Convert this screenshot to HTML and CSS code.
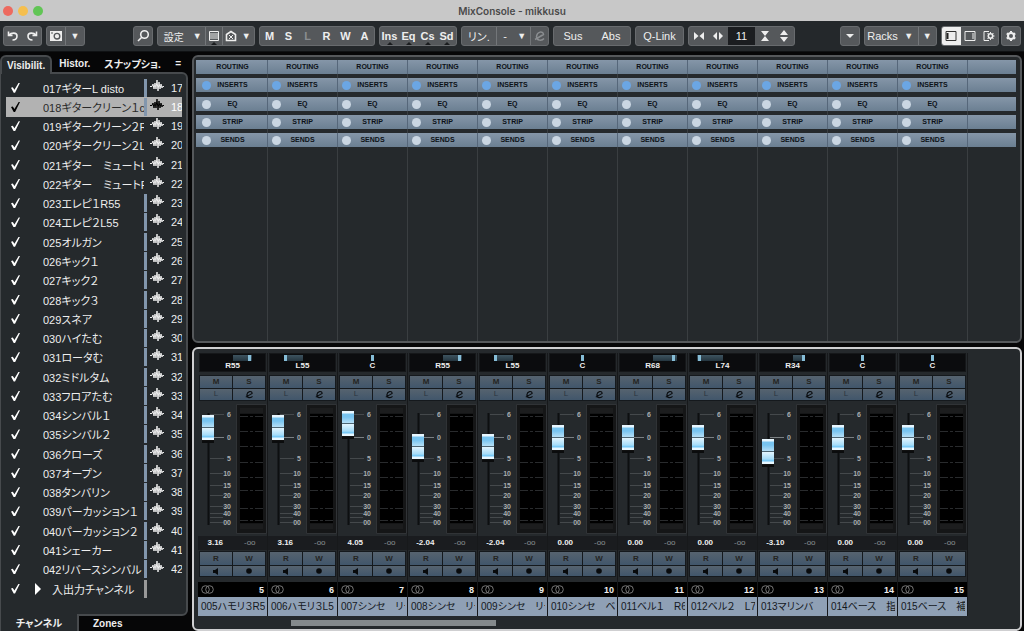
FILE: index.html
```html
<!DOCTYPE html>
<html lang="ja">
<head>
  <meta charset="utf-8">
  <title>MixConsole - mikkusu</title>
  <link rel="stylesheet" href="styles.css">
</head>
<body>
  <header class="titlebar">
    <span class="light red"></span>
    <span class="light yellow"></span>
    <span class="light green"></span>
    <h1>MixConsole - mikkusu</h1>
  </header>

  <nav class="toolbar">
    <div class="group w39">
      <button aria-label="Undo"><svg width="12" height="12" viewBox="0 0 12 12"><path d="M1.500 1.500v4h4M2 5.200C4 2.500 10 2 10 6c0 2.500-2 4-4.500 4" class="line thick"/></svg></button>
      <button aria-label="Redo"><svg width="12" height="12" viewBox="0 0 12 12"><path d="M10.500 1.500v4h-4M10 5.200C8 2.500 2 2 2 6c0 2.500 2 4 4.500 4" class="line thick"/></svg></button>
    </div>
    <div class="group w39">
      <button aria-label="Snapshot"><svg width="14" height="12" viewBox="0 0 14 12"><path d="M1 1h12v10H1z" fill="#eee"/><circle cx="8" cy="6.200" r="2.800" fill="none" stroke="#55585b" stroke-width="1.400"/><path d="M2 3h2" stroke="#55585b"/></svg></button>
      <button class="split arrow" aria-label="Snapshot menu">▼</button>
    </div>
    <div class="group w20 gap-search">
      <button aria-label="Search"><svg width="14" height="14" viewBox="0 0 14 14"><circle cx="8.500" cy="5.500" r="3.800" class="line thick"/><path d="M5.800 8.200L2 12" class="line thick"/></svg></button>
    </div>
    <div class="group w98">
      <button class="wide small">設定</button>
      <button class="arrow" aria-label="Settings menu">▼</button>
      <button class="split marked" aria-label="List"><svg width="12" height="12" viewBox="0 0 12 12"><path d="M1.500 1.500h9v9h-9zM2 4h8M2 6h8M2 8h8" class="line"/></svg></button>
      <button class="split" aria-label="Channel types"><svg width="12" height="12" viewBox="0 0 12 12"><path d="M1.500 10.500V4.500L6 1.500l4.500 3v6z" class="line thick"/><path d="M4 5l4 4M8 5L4 9" class="line"/></svg></button>
      <button class="arrow" aria-label="Channel types menu">▼</button>
    </div>
    <div class="group w116 bold">
      <button>M</button><button>S</button><button class="off">L</button><button>R</button><button>W</button><button>A</button>
    </div>
    <div class="group w78 bold">
      <button class="marked">Ins</button><button class="marked">Eq</button><button class="marked">Cs</button><button class="marked">Sd</button>
    </div>
    <div class="group w88">
      <button class="wide">リン.</button>
      <button class="split">-</button>
      <button class="arrow" aria-label="Link menu">▼</button>
      <button class="split" aria-label="Bypass"><svg width="12" height="12" viewBox="0 0 12 12"><path d="M1 9.500L9.500 4.500C9 .5 3 1.500 2.500 6.500c0 4.500 5.500 4.500 7.500 2" class="line faded"/></svg></button>
    </div>
    <div class="group w78"><button>Sus</button><button>Abs</button></div>
    <div class="group w49"><button>Q-Link</button></div>
    <div class="group w107">
      <button aria-label="Narrower"><svg width="12" height="10" viewBox="0 0 12 10"><path d="M1 1l4.500 4L1 9zM11 1L6.500 5 11 9z" fill="#eee"/></svg></button>
      <button aria-label="Wider"><svg width="12" height="10" viewBox="0 0 12 10"><path d="M5 1v8L1 5zM7 1v8l4-4z" fill="#eee"/></svg></button>
      <input class="count" type="text" value="11" aria-label="Channel width">
      <button aria-label="Lower"><svg width="12" height="12" viewBox="0 0 12 12"><path d="M2 1h8L6 6l4 5H2l4-5z" fill="#eee"/></svg></button>
      <button aria-label="Higher"><svg width="12" height="12" viewBox="0 0 12 12"><path d="M6 0l4 5H2zM6 12l4-5H2z" fill="#eee"/></svg></button>
    </div>
    <div class="group w20 push">
      <button aria-label="More"><svg width="8" height="4" viewBox="0 0 8 4"><path d="M0 0h8L4 4z" fill="#eee"/></svg></button>
    </div>
    <div class="group w73">
      <button class="wide">Racks</button>
      <button class="arrow" aria-label="Racks menu">▼</button>
      <button class="split arrow" aria-label="Racks presets">▼</button>
    </div>
    <div class="group w58">
      <button class="selected" aria-label="Left zone"><svg width="12" height="12" viewBox="0 0 12 12"><path d="M1 1.500h10v9H1z" fill="none" stroke="#333"/><path d="M2.500 3v6" stroke="#222" stroke-width="2"/></svg></button>
      <button aria-label="Right zone"><svg width="12" height="12" viewBox="0 0 12 12"><path d="M1 1.500h10v9H1zM9 3v6" class="line"/></svg></button>
      <button aria-label="Zone setup"><svg width="12" height="12" viewBox="0 0 12 12"><path d="M6 1.500H1v9h5" class="line"/><circle cx="7.500" cy="6" r="2.200" class="line thick"/><path d="M7.500 2v1.500M7.500 8.500V10M10 6h1.500M9.500 4l1-1M9.500 8l1 1M5.500 4l-1-1M5.500 8l-1 1" class="line"/></svg></button>
    </div>
    <div class="group w20 gear">
      <button aria-label="Setup"><svg width="12" height="12" viewBox="0 0 12 12"><circle cx="6" cy="6" r="3" fill="none" stroke="#eee" stroke-width="2"/><path d="M6 1v1.500M6 9.500V11M1.700 3.500L3 4.200M9 7.800l1.300.7M1.700 8.500L3 7.800M9 4.200l1.300-.7" stroke="#eee" stroke-width="2"/></svg></button>
    </div>
  </nav>

  <div class="workspace">
    <aside class="sidebar">
      <div class="tabs">
        <button class="tab active">Visibilit.</button>
        <button class="tab">Histor.</button>
        <button class="tab">スナップショ.</button>
        <button class="tab menu">=</button>
      </div>
      <div class="tracks" id="tracks"></div>
      <div class="bottom-tabs">
        <button class="tab active">チャンネル</button>
        <button class="tab">Zones</button>
      </div>
    </aside>

    <main class="console">
      <section class="racks" id="racks"></section>
      <section class="faders">
        <div class="strips" id="strips"></div>
        <div class="scrollbar"></div>
      </section>
    </main>
  </div>

  <script src="mixer.js"></script>
</body>
</html>
```

FILE: styles.css
```css
* {
  box-sizing: border-box;
}
body {
  margin: 0;
  height: 100vh;
  display: flex;
  flex-direction: column;
  overflow: hidden;
  background: #060607;
  color: #eee;
  font-family: "Liberation Sans", "Noto Sans CJK JP", sans-serif;
  font-size: 11px;
  font-feature-settings: "palt";
}
button, input {
  margin: 0;
  padding: 0;
  border: 0;
  background: none;
  color: inherit;
  font: inherit;
  font-feature-settings: inherit;
}

/* title bar */
.titlebar {
  flex: none;
  position: relative;
  display: flex;
  align-items: center;
  gap: 5px;
  height: 21px;
  padding-left: 3px;
  background: #c8c8c8;
}
.titlebar h1 {
  position: absolute;
  left: 0;
  right: 0;
  margin: 0;
  text-align: center;
  font: 600 10px Inter, sans-serif;
  color: #4a4a4a;
}
.light {
  width: 10px;
  height: 10px;
  border-radius: 50%;
}
.red { background: #ed6a5f; }
.yellow { background: #f5bf4f; }
.green { background: #61c555; }

/* toolbar */
.toolbar {
  flex: none;
  display: flex;
  align-items: center;
  gap: 4px;
  height: 31px;
  padding: 0 3px;
  background: #24282b;
  border-bottom: 1px solid #101214;
}
.group {
  flex: none;
  display: flex;
  height: 20px;
  border: 1px solid #686b6e;
  border-radius: 3px;
  background: #55585b;
  overflow: hidden;
}
.group button {
  flex: 1;
  display: flex;
  align-items: center;
  justify-content: center;
  position: relative;
  white-space: nowrap;
}
.group .wide { flex: 2; }
.group .split { border-left: 1px solid #737679; }
.group .arrow { font-size: 9px; }
.group .small { font-size: 10px; }
.group .off { color: #8a8d90; }
.group .selected { background: #eee; }
.bold { font-weight: bold; }
.marked::after {
  content: "";
  position: absolute;
  left: calc(50% - 3px);
  bottom: 0;
  border: 3px solid transparent;
  border-top: 0;
  border-bottom-color: #1a1c1e;
}
.w20 { width: 20px; }
.w39 { width: 39px; }
.w49 { width: 49px; }
.w58 { width: 58px; }
.w73 { width: 73px; }
.w78 { width: 78px; }
.w88 { width: 88px; }
.w98 { width: 98px; }
.w107 { width: 107px; }
.w116 { width: 116px; }
.gap-search { margin-left: 44px; }
.push { margin-left: auto; }
.gear { margin-left: -2px; }
.count {
  width: 27px;
  background: #1b1d20;
  text-align: center;
}
.line {
  fill: none;
  stroke: #eee;
  stroke-width: 1;
}
.thick { stroke-width: 1.6; }
.faded { stroke: #8a8d90; stroke-width: 1.5; }

.workspace {
  flex: 1;
  min-height: 0;
  display: flex;
  gap: 4px;
  padding: 3px 2px 0 0;
}

/* visibility list */
.sidebar {
  flex: none;
  width: 188px;
  display: flex;
  flex-direction: column;
}
.tabs, .bottom-tabs {
  flex: none;
  display: flex;
}
.tab {
  height: 17px;
  padding: 0 7px;
  font-size: 10px;
  font-weight: bold;
  white-space: nowrap;
}
.tabs .active {
  position: relative;
  height: 19px;
  margin-bottom: -2px;
  border: 2px solid #474a4d;
  border-bottom: 0;
  border-radius: 6px 6px 0 0;
  padding: 0 5px;
  background: #25292c;
}
.tabs .menu { margin-left: auto; }
.tracks {
  flex: 1;
  min-height: 0;
  display: flex;
  flex-direction: column;
  padding: 4px 4px 16px 5px;
  background: #25292c;
  border: 2px solid #474a4d;
  border-left-width: 1px;
  border-radius: 0 6px 6px 0;
}
.track {
  flex: 1;
  min-height: 0;
  display: grid;
  grid-template-columns: 37px 101px 4px 23px 11px;
  align-items: center;
  white-space: nowrap;
}
.track.current {
  background: #b2b2b2;
  color: #2a2a2a;
}
.track.folder { grid-template-columns: 28px 18px 92px 4px; }
.track input {
  appearance: none;
  width: 9px;
  height: 10px;
  margin-left: 5px;
}
.track input:checked {
  background: #fff;
  clip-path: polygon(0 50%, 20% 45%, 38% 70%, 85% 0, 100% 0, 45% 100%, 30% 100%);
}
.track.current input:checked { background: #000; }
.track label, .track .num { overflow: hidden; }
.track.current .num { color: #fff; }
.track .bar {
  width: 3px;
  height: 18px;
}
.bar.audio { background: #8296ad; }
.bar.io { background: #999; }
.wave { margin: -4px 0 0 2px; }
.wave path { fill: none; stroke: #eee; }
.current .wave path { stroke: #000; }
.bottom-tabs .tab { height: 15px; }
.bottom-tabs .active {
  position: relative;
  width: 77px;
  height: 17px;
  margin-top: -2px;
  background: #25292c;
  border-left: 1px solid #474a4d;
}
.bottom-tabs .tab + .tab {
  flex: 1;
  padding-left: 14px;
  border-left: 2px solid #474a4d;
  text-align: left;
}

/* channel racks */
.console {
  flex: 1;
  min-width: 0;
  display: flex;
  flex-direction: column;
  gap: 4px;
}
.racks {
  flex: 1;
  min-height: 0;
  display: flex;
  padding: 3px 4px 0 2px;
  background: #25292c;
  border: 2px solid #55585b;
  border-radius: 6px;
  overflow: hidden;
}
.rack {
  flex: none;
  width: 70px;
  border-right: 1px solid #3a3e41;
}
.rack:first-child { width: 72px; }
.rack.rest { flex: 1; border: 0; }
.slots {
  display: flex;
  flex-direction: column;
  justify-content: space-between;
  height: 87px;
}
.slot {
  position: relative;
  height: 14px;
  margin-right: -1px;
  border-right: 1px solid #56677a;
  background: linear-gradient(#8596a8, #6b7f92);
  text-align: center;
  font-size: 7px;
  line-height: 14px;
  font-weight: bold;
  color: #0c1116;
}
.rack:first-child .slot { padding-left: 2px; }
.rest .slot { margin: 0; border: 0; }
.dot {
  position: absolute;
  left: 4px;
  top: 3px;
  width: 9px;
  height: 9px;
  border-radius: 50%;
  background: #cad6e2;
}
.rack:first-child .dot { left: 6px; }
.dot.on { background: #6ba6e4; }

/* faders */
.faders {
  flex: none;
  padding: 4px 4px 3px;
  background: #25292c;
  border: 2px solid #cfcfd1;
  border-radius: 6px;
}
.strips { display: flex; }
.strip {
  flex: none;
  width: 70px;
  border-right: 1px solid #17191b;
}
.pan {
  height: 19px;
  margin: 0 1px 3px;
  padding-top: 1px;
  background: #0b0c0e;
  border: 1px solid #151719;
  text-align: center;
  font-size: 8px;
  line-height: 10px;
  font-weight: bold;
}
.pan input {
  appearance: none;
  display: block;
  width: 100%;
  height: 6px;
  background: linear-gradient(#3d535f, #253640) no-repeat;
}
.pan input::-webkit-slider-thumb {
  appearance: none;
  width: 3px;
  height: 6px;
  background: #86bdd7;
}
.pan output { display: block; }
.keys {
  display: grid;
  grid-template-columns: 1fr 1fr;
  gap: 1px;
  height: 26px;
  margin: 2px 1px;
  padding: 1px;
  background: #15191d;
}
.keys button {
  display: flex;
  align-items: center;
  justify-content: center;
  background: linear-gradient(#56636f, #41566b);
  font-size: 8px;
  line-height: 10px;
  font-weight: bold;
  color: #24241f;
}
.keys .dim { color: #2c3640; font-weight: normal; }
.readout + .keys { margin-top: 1px; }
.body {
  display: grid;
  grid-template-columns: 35px 31px;
  height: 133px;
  margin-left: 1px;
  justify-content: space-between;
  align-items: start;
}
.scale, .level { grid-area: 1 / 1; }
.scale text {
  fill: #a9adb0;
  font-size: 7px;
  font-weight: bold;
  text-anchor: end;
}
.level {
  appearance: none;
  writing-mode: vertical-lr;
  direction: rtl;
  width: 12px;
  height: 131px;
  margin-left: 3px;
  position: relative;
}
.level::-webkit-slider-thumb {
  appearance: none;
  width: 12px;
  height: 26px;
  background: linear-gradient(#e8f7ff 0 2px, #78c4f0 3px 6px, #b6dff6 12px, #4c6472 12px 13px, #e3f5ff 13px, #a6dcf8 20px, #6cc4f6 22px, #e8f7ff 23px 25px, #111 25px);
  box-shadow: 0 2px 0 #0b0c0d;
}
.meter { display: block; }
.readout {
  display: grid;
  grid-template-columns: 1fr 1fr;
  height: 14px;
  background: #1a1c1f;
  font-size: 8px;
  line-height: 14px;
  font-weight: bold;
  text-align: center;
}
.readout .peak { color: #8b8f93; font-weight: normal; }
.id {
  display: flex;
  align-items: center;
  justify-content: space-between;
  height: 15px;
  margin-top: 5px;
  padding: 0 3px;
  background: #000;
  font-size: 9px;
  font-weight: bold;
}
.name {
  height: 19px;
  padding-left: 3px;
  border-right: 2px solid #8fa0b5;
  background: #8fa0b5;
  color: #14181d;
  font-size: 10px;
  line-height: 19px;
  white-space: nowrap;
  overflow: hidden;
}
.scrollbar {
  width: 25%;
  height: 6px;
  margin: 4px 0 0 93px;
  background: #84898c;
}
```

FILE: mixer.js
```js
const tracks = [
  "017ギターL disto", "018ギタークリーン１c", "019ギタークリーン２R", "020ギタークリーン２L",
  "021ギター　ミュートL", "022ギター　ミュートR", "023エレピ１R55", "024エレピ２L55", "025オルガン",
  "026キック１", "027キック２", "028キック３", "029スネア", "030ハイたむ", "031ロータむ",
  "032ミドルタム", "033フロアたむ", "034シンバル１", "035シンバル２", "036クローズ",
  "037オープン", "038タンバリン", "039パーカッション１", "040パーカッション２",
  "041シェーカー", "042リバースシンバル"
];

// level is the fader height in px above the bottom stop
const channels = [
  { name: "005ハモリ３R5", pan: 55, db: "3.16", level: 93 },
  { name: "006ハモリ３L5", pan: -55, db: "3.16", level: 93 },
  { name: "007シンセ　リー", pan: 0, db: "4.05", level: 97 },
  { name: "008シンセ　リー", pan: 55, db: "-2.04", level: 74 },
  { name: "009シンセ　リー", pan: -55, db: "-2.04", level: 74 },
  { name: "010シンセ　ベ", pan: 0, db: "0.00", level: 83 },
  { name: "011ベル１　R6", pan: 68, db: "0.00", level: 83 },
  { name: "012ベル２　L7", pan: -74, db: "0.00", level: 83 },
  { name: "013マリンバ", pan: 34, db: "-3.10", level: 69 },
  { name: "014ベース　指", pan: 0, db: "0.00", level: 83 },
  { name: "015ベース　補引", pan: 0, db: "0.00", level: 83 }
];

const wave = `<svg class="wave" width="14" height="12" viewBox="0 0 14 12"><path d="M0 6.500L2 6.500 3 4l1 5L5 3l1 6L7 0l1 11L9 2l1 7 1-5 1 4 .5-1.500H14"/></svg>`;

document.getElementById("tracks").innerHTML = tracks.map((name, i) => {
  const bar = i < 2 || i > 5 ? "audio" : "";
  return `<div class="track ${i === 1 ? "current" : ""}">
    <input type="checkbox" id="t${i}" checked>
    <label for="t${i}">${name}</label>
    <span class="bar ${bar}"></span>${wave}
    <span class="num">${i + 17}</span>
  </div>`;
}).join("") + `<div class="track folder">
    <input type="checkbox" id="io" checked>
    <svg width="7" height="12" viewBox="0 0 7 12"><path d="M1 0l6 6-6 6z" fill="#fff"/></svg>
    <label for="io">入出力チャンネル</label>
    <span class="bar io"></span>
  </div>`;

const slots = ["ROUTING", "INSERTS", "EQ", "STRIP", "SENDS"];
const rack = `<div class="rack"><div class="slots">${slots.map((s, i) =>
  `<div class="slot">${i ? `<span class="dot ${i === 1 ? "on" : ""}"></span>` : ""}${s}</div>`
).join("")}</div></div>`;
document.getElementById("racks").innerHTML = rack.repeat(channels.length) +
  `<div class="rack rest"><div class="slots">${'<div class="slot"></div>'.repeat(5)}</div></div>`;

const marks = [[11, "6"], [34, "0"], [55, "5"], [70, "10"], [82, "15"], [92, "20"], [103, "30"], [110, "40"], [119, "00"]];
const scale = `<svg class="scale" width="35" height="131" viewBox="0 0 35 131">
  <path d="M9.500 10v112" stroke="#0d0f10" stroke-width="2"/>
  ${marks.map(([y, t]) => `<path d="M11 ${y}.5h${t.length > 1 ? 13 : 14}" stroke="${t === "0" ? "#7b8083" : "#45494c"}"/><text x="32" y="${y + 3}">${t}</text>`).join("")}
  <path d="M11 114.500h13" stroke="#45494c"/>
</svg>`;
const meter = `<svg class="meter" width="31" height="131" viewBox="0 0 31 131">
  <path d="M.5 1.500h30v129H.5z" fill="#151617" stroke="#303336"/>
  <path d="M4 11h23v109H4z" fill="#000"/>
  <path d="M4 5h23v5H4zM4 121h23v5H4z" fill="#1c1d1e"/>
  ${[13, 28, 43, 59, 74, 87, 105, 117].map(y => `<path d="M4 ${y}.5h8M19 ${y}.5h8M14 ${y}.5h3" stroke="#292b2d"/>`).join("")}
</svg>`;

document.getElementById("strips").innerHTML = channels.map((c, i) => {
  const label = c.pan ? (c.pan > 0 ? "R" : "L") + Math.abs(c.pan) : "C";
  const size = Math.round(Math.abs(c.pan) * 0.35);
  const start = c.pan > 0 ? 33 : 33 - size;
  return `<div class="strip">
    <div class="pan">
      <input type="range" min="-100" max="100" value="${c.pan}" aria-label="Pan ${i + 5}" style="background-size:${size}px 6px;background-position:${start}px 0">
      <output>${label}</output>
    </div>
    <div class="keys">
      <button>M</button><button>S</button>
      <button class="dim">L</button>
      <button aria-label="Edit"><svg width="9" height="9" viewBox="0 0 12 12"><path d="M1 9.500L9.500 4.500C9 .5 3 1.500 2.500 6.500c0 4.500 5.500 4.500 7.500 2" fill="none" stroke="#0c0f12" stroke-width="1.500"/></svg></button>
    </div>
    <div class="body">
      ${scale}
      <input class="level" type="range" min="0" max="105" value="${c.level}" aria-label="Level ${i + 5}">
      ${meter}
    </div>
    <div class="readout"><span>${c.db}</span><span class="peak">-oo</span></div>
    <div class="keys">
      <button>R</button><button>W</button>
      <button aria-label="Monitor"><svg width="6" height="7" viewBox="0 0 6 7"><path d="M0 2h2l3-2v7L2 5H0z" fill="#080a0c"/></svg></button>
      <button aria-label="Record"><svg width="6" height="6" viewBox="0 0 6 6"><circle cx="3" cy="3" r="2.800" fill="#080a0c"/></svg></button>
    </div>
    <div class="id">
      <svg width="13" height="9" viewBox="0 0 13 9"><circle cx="4.500" cy="4.500" r="3.800" fill="none" stroke="#777"/><circle cx="8.500" cy="4.500" r="3.800" fill="none" stroke="#777"/></svg>
      <span>${i + 5}</span>
    </div>
    <div class="name">${c.name}</div>
  </div>`;
}).join("");
```
